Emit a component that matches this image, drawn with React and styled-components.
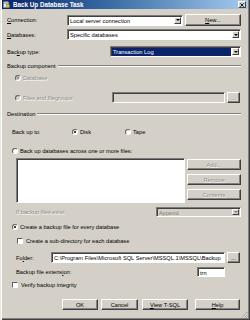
import React from "react";
import styled, { createGlobalStyle } from "styled-components";

const Global = createGlobalStyle`
  html, body { margin: 0; padding: 0; background: #d4d0c8; overflow: hidden; }
  #root { width: 250px; height: 320px; }
`;

const Window = styled.div`
  position: relative;
  width: 250px;
  height: 320px;
  box-sizing: border-box;
  background: #d4d0c8;
  box-shadow: inset 1px 0 0 #e8e6e0, inset 2px 0 0 #ffffff, inset -1px -1px 0 #404040, inset -2px -2px 0 #808080;
  font-family: "Liberation Sans", Arial, sans-serif;
  font-size: 5.7px;
  color: #000;
  display: flex;
  flex-direction: column;
  overflow: hidden;
`;

const TitleBar = styled.div`
  height: 9px;
  margin: 0 2px;
  background: linear-gradient(to right, #0a246a, #3a6ea5 45%, #a6caf0);
  display: flex;
  align-items: center;
  padding: 0 2px 0 1px;
  color: #fff;
  font-weight: bold;
  font-size: 6.3px;
`;

const TitleText = styled.span`
  margin-left: 3px;
  flex: 1;
  white-space: nowrap;
`;

const CloseBtn = styled.div`
  width: 8px;
  height: 7px;
  box-sizing: border-box;
  background: #d4d0c8;
  border: 1px solid;
  border-color: #fff #404040 #404040 #fff;
  display: flex;
  align-items: center;
  justify-content: center;
`;

const Row = styled.div`
  display: flex;
  align-items: center;
  height: ${(p) => p.$h}px;
  margin-top: ${(p) => p.$mt}px;
  padding-left: ${(p) => p.$pl || 0}px;
  padding-right: ${(p) => p.$pr ?? 9}px;
  flex: none;
  white-space: nowrap;
`;

const Label = styled.span`
  flex: none;
  width: ${(p) => (p.$w ? p.$w + "px" : "auto")};
  color: ${(p) => (p.$disabled ? "#8a8a8a" : "#000")};
  text-shadow: ${(p) => (p.$disabled ? "0.5px 0.5px 0 #fff" : "none")};
  margin-left: ${(p) => p.$ml || 0}px;
`;

const Field = styled.div`
  box-sizing: border-box;
  height: ${(p) => p.$h || 11}px;
  width: ${(p) => (p.$w ? p.$w + "px" : "auto")};
  flex: ${(p) => (p.$w ? "none" : "1")};
  margin-left: ${(p) => p.$ml || 0}px;
  background: ${(p) => (p.$disabled ? "#d4d0c8" : "#fff")};
  border: 1px solid;
  border-color: #7a7a7a #ffffff #ffffff #7a7a7a;
  box-shadow: inset 1px 1px 0 #404040;
  display: flex;
  align-items: center;
  padding: 1px 1px 0 1px;
  overflow: hidden;
  white-space: nowrap;
  color: ${(p) => (p.$disabled ? "#808080" : "#000")};
`;

const FieldText = styled.span`
  flex: 1;
  align-self: stretch;
  display: flex;
  align-items: center;
  padding-left: 1px;
  margin-right: 1px;
  background: ${(p) => (p.$selected ? "#0a246a" : "transparent")};
  color: ${(p) => (p.$selected ? "#fff" : "inherit")};
  overflow: hidden;
`;

const DropBtn = styled.span`
  flex: none;
  width: 7px;
  align-self: stretch;
  box-sizing: border-box;
  background: #d4d0c8;
  border: 1px solid;
  border-color: #fff #404040 #404040 #fff;
  display: flex;
  align-items: center;
  justify-content: center;
  margin-bottom: 1px;
  &::after {
    content: "";
    border-left: 2px solid transparent;
    border-right: 2px solid transparent;
    border-top: 2px solid ${(p) => (p.$disabled ? "#808080" : "#000")};
  }
`;

const Button = styled.div`
  box-sizing: border-box;
  flex: none;
  width: ${(p) => p.$w}px;
  height: ${(p) => p.$h || 11}px;
  margin-left: ${(p) => p.$ml || 0}px;
  background: #d4d0c8;
  border: 1px solid;
  border-color: #ffffff #404040 #404040 #ffffff;
  box-shadow: inset -1px -1px 0 #808080;
  display: flex;
  align-items: center;
  justify-content: center;
  color: ${(p) => (p.$disabled ? "#8a8a8a" : "#000")};
  text-shadow: ${(p) => (p.$disabled ? "0.5px 0.5px 0 #fff" : "none")};
`;

const GroupHead = styled.div`
  display: flex;
  align-items: center;
  height: 8px;
  margin-top: ${(p) => p.$mt}px;
  padding-left: 7px;
  padding-right: 9px;
  flex: none;
  &::after {
    content: "";
    flex: 1;
    margin-left: 2px;
    height: 0;
    border-top: 1px solid #808080;
    border-bottom: 1px solid #fff;
  }
`;

const RadioDot = styled.span`
  flex: none;
  box-sizing: border-box;
  width: 6px;
  height: 6px;
  margin-left: ${(p) => p.$ml || 0}px;
  margin-right: 2px;
  border-radius: 50%;
  border: 1px solid;
  border-color: #606060 #ffffff #ffffff #606060;
  background: ${(p) => (p.$disabled ? "#d4d0c8" : "#fff")};
  display: flex;
  align-items: center;
  justify-content: center;
  &::after {
    content: "";
    display: ${(p) => (p.$on ? "block" : "none")};
    width: 2px;
    height: 2px;
    border-radius: 50%;
    background: ${(p) => (p.$disabled ? "#808080" : "#000")};
  }
`;

const CheckBox = styled.span`
  flex: none;
  box-sizing: border-box;
  width: 6px;
  height: 6px;
  margin-left: ${(p) => p.$ml || 0}px;
  margin-right: ${(p) => p.$mr || 3}px;
  border: 1px solid;
  border-color: #606060 #ffffff #ffffff #606060;
  background: #fff;
`;

const ListArea = styled.div`
  display: flex;
  height: 45px;
  margin-top: 3px;
  padding-left: 16px;
  padding-right: 9px;
  flex: none;
`;

const ListBox = styled.div`
  box-sizing: border-box;
  width: 169px;
  height: 45px;
  background: #fff;
  border: 1px solid;
  border-color: #7a7a7a #ffffff #ffffff #7a7a7a;
  box-shadow: inset 1px 1px 0 #404040;
`;

const SideButtons = styled.div`
  display: flex;
  flex-direction: column;
  gap: 4px;
  margin-left: 2px;
  padding-top: 1px;
`;

const U = styled.span`
  text-decoration: underline;
  text-decoration-thickness: 0.5px;
  text-underline-offset: 0.5px;
`;

const Grip = styled.svg`
  position: absolute;
  right: 2px;
  bottom: 2px;
`;

export default function App() {
  return (
    <>
      <Global />
      <Window>
        <TitleBar>
          <svg width="7" height="7" viewBox="0 0 7 7">
            <rect x="0.5" y="1" width="5" height="5.5" fill="#e8e8e8" stroke="#8a8a8a" strokeWidth="0.6" />
            <ellipse cx="3" cy="1.6" rx="2.4" ry="1" fill="#c8c8c8" stroke="#7a7a7a" strokeWidth="0.5" />
            <rect x="3.5" y="3.5" width="3" height="3" fill="#d8c070" stroke="#806020" strokeWidth="0.4" />
          </svg>
          <TitleText>Back Up Database Task</TitleText>
          <CloseBtn>
            <svg width="4" height="4" viewBox="0 0 4 4">
              <path d="M0.3 0.3 L3.7 3.7 M3.7 0.3 L0.3 3.7" stroke="#000" strokeWidth="0.9" />
            </svg>
          </CloseBtn>
        </TitleBar>

        <Row $h={12} $mt={5} $pl={7}>
          <Label $w={60}><U>C</U>onnection:</Label>
          <Field $w={116}>
            <FieldText>Local server connection</FieldText>
            <DropBtn />
          </Field>
          <Button $w={56} $h={12} $ml={2}><U>N</U>ew...</Button>
        </Row>

        <Row $h={11} $mt={3} $pl={7}>
          <Label $w={60}><U>D</U>atabases:</Label>
          <Field>
            <FieldText>Specific databases</FieldText>
            <DropBtn />
          </Field>
        </Row>

        <Row $h={11} $mt={6} $pl={7}>
          <Label $w={103}>Bac<U>k</U>up type:</Label>
          <Field>
            <FieldText $selected>Transaction Log</FieldText>
            <DropBtn />
          </Field>
        </Row>

        <GroupHead $mt={5}>Backup component</GroupHead>

        <Row $h={8} $mt={4} $pl={15}>
          <RadioDot $on $disabled />
          <Label $disabled>Database</Label>
        </Row>

        <Row $h={11} $mt={10} $pl={15} $pr={10}>
          <RadioDot $disabled />
          <Label $w={89} $disabled>Files and filegroups:</Label>
          <Field $disabled />
          <Button $w={13} $ml={2} $disabled>...</Button>
        </Row>

        <GroupHead $mt={7}>Destination</GroupHead>

        <Row $h={8} $mt={10} $pl={12}>
          <Label $w={60}>Back up to:</Label>
          <RadioDot $on />
          <Label $w={45}>Disk</Label>
          <RadioDot />
          <Label>Tape</Label>
        </Row>

        <Row $h={8} $mt={11} $pl={12}>
          <RadioDot />
          <Label>Back up databases across one or more files:</Label>
        </Row>

        <ListArea>
          <ListBox />
          <SideButtons>
            <Button $w={54} $disabled>Add...</Button>
            <Button $w={54} $disabled>Remove</Button>
            <Button $w={54} $disabled>Contents</Button>
          </SideButtons>
        </ListArea>

        <Row $h={10} $mt={4} $pl={16}>
          <Label $w={140} $disabled>If backup files exist:</Label>
          <Field $h={10} $disabled>
            <FieldText>Append</FieldText>
            <DropBtn $disabled />
          </Field>
        </Row>

        <Row $h={8} $mt={6} $pl={12}>
          <RadioDot $on />
          <Label>Create a backup file for every database</Label>
        </Row>

        <Row $h={8} $mt={6} $pl={17}>
          <CheckBox />
          <Label>Create a sub-directory for each database</Label>
        </Row>

        <Row $h={11} $mt={7} $pl={16} $pr={10}>
          <Label $w={35}>Fo<U>l</U>der:</Label>
          <Field>
            <FieldText>C:\Program Files\Microsoft SQL Server\MSSQL.1\MSSQL\Backup</FieldText>
          </Field>
          <Button $w={13} $ml={2}>...</Button>
        </Row>

        <Row $h={10} $mt={4} $pl={16} $pr={25}>
          <Label $w={181}>Backup file extens<U>i</U>on:</Label>
          <Field $h={10}>
            <FieldText>trn</FieldText>
          </Field>
        </Row>

        <Row $h={8} $mt={4} $pl={12}>
          <CheckBox $mr={3} />
          <Label>Verify backup integrity</Label>
        </Row>

        <Row $h={11} $mt={10} $pl={62} $pr={10}>
          <Button $w={36}>OK</Button>
          <Button $w={37} $ml={3}>Cancel</Button>
          <Button $w={46} $ml={4}><U>V</U>iew T-SQL</Button>
          <Button $w={45} $ml={7}><U>H</U>elp</Button>
        </Row>

        <Grip width="7" height="7" viewBox="0 0 7 7">
          <path d="M6.5 1 L1 6.5 M6.5 3.5 L3.5 6.5 M6.5 5.5 L5.5 6.5" stroke="#808080" strokeWidth="0.8" />
          <path d="M6.5 2 L2 6.5 M6.5 4.5 L4.5 6.5" stroke="#ffffff" strokeWidth="0.6" />
        </Grip>
      </Window>
    </>
  );
}
